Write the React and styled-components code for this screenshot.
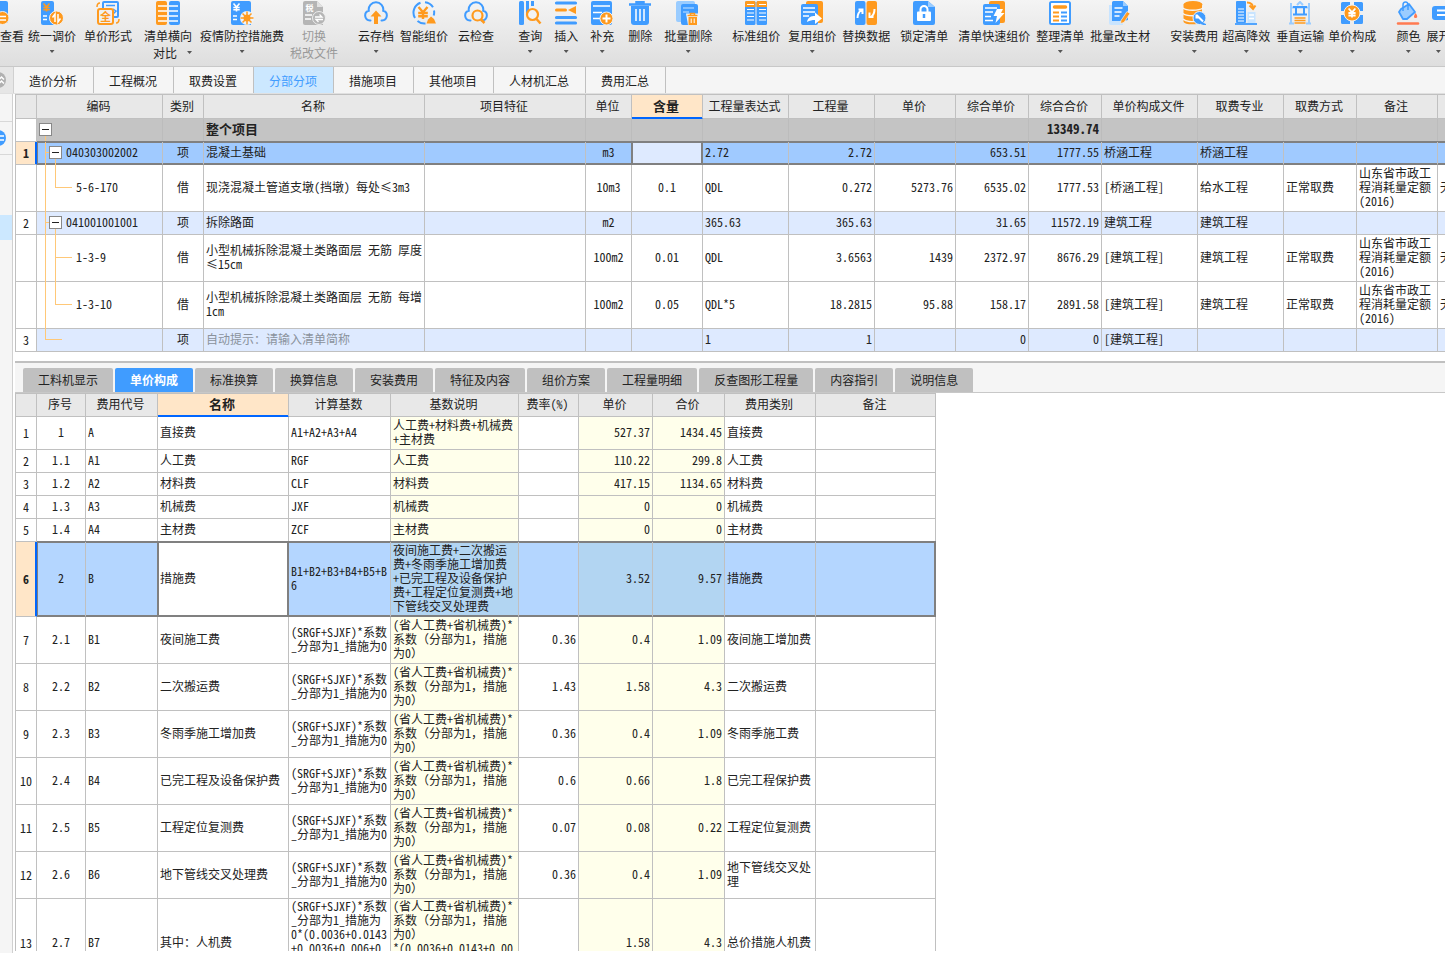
import React from 'react';
import styled, { createGlobalStyle, css } from 'styled-components';

const BLUE = '#409cff';
const ORANGE = '#ff9a1e';
const LINE = '#c0c0c0';
const DARK = '#808080';
const UI_FONT = '"Noto Sans CJK SC", sans-serif';
const GRID_FONT = '"Noto Sans Mono CJK SC", "Noto Sans CJK SC", monospace';

const GlobalStyle = createGlobalStyle`
  * { box-sizing: border-box; }
  body { margin: 0; background: #fff; color: #222; font: 12px/14px ${UI_FONT}; }
  button { font: inherit; color: inherit; border: 0; padding: 0; background: none; cursor: pointer; }
`;

const Page = styled.div`
  display: flex;
  flex-direction: column;
  height: 100vh;
  overflow: hidden;
`;

/* ---------- toolbar ---------- */

const Toolbar = styled.header`
  display: flex;
  align-items: flex-start;
  flex: none;
  height: 67px;
  overflow: hidden;
  background: linear-gradient(#f4f4f4, #dedede);
  border-bottom: 1px solid #c8c8c8;
`;

const Tool = styled.button`
  display: flex;
  flex: none;
  flex-direction: column;
  align-items: center;
  margin-left: ${(p) => p.$gap}px;
  padding-top: 1px;
  line-height: 17px;
  white-space: nowrap;
  color: ${(p) => (p.disabled ? '#999' : '#222')};
`;

const ClippedTool = styled(Tool)`
  width: 22px;
  align-items: flex-start;
`;

const ToolIcon = styled.svg`
  display: block;
  width: 24px;
  height: 24px;
  margin-bottom: 2px;
`;

const SecondLine = styled.span`
  display: flex;
  align-self: ${(p) => (p.$arrow ? 'flex-end' : 'center')};
  align-items: center;
  gap: 10px;
`;

const Arrow = styled.span`
  width: 5px;
  height: 3px;
  margin-top: ${(p) => (p.$below ? 6 : 0)}px;
  background: #555;
  clip-path: polygon(0 0, 100% 0, 50% 100%);
`;

const Coin = ({ x, y, size = 8, color = '#fff', weight = 1.6 }) => (
  <g transform={`translate(${x} ${y}) scale(${size / 8})`}>
    <path d="M-3-4L0-.5 3-4M0-.5V4M-3.200 0h6.400M-3.200 2.200h6.400" fill="none" stroke={color} strokeWidth={weight} />
  </g>
);

const Cloud = () => (
  <path d="M6.500 19.500H6a5 5 0 0 1-1.200-9.800A7.300 7.300 0 1 1 19.200 9.700A5 5 0 0 1 18 19.500h-.5" fill="none" stroke={BLUE} strokeWidth="2" strokeLinecap="round" />
);

const icons = {
  view: (
    <>
      <rect x="-6" y="0" width="14" height="22" rx="2" fill={BLUE} />
      <circle cx="2.500" cy="17" r="6.500" fill={ORANGE} stroke="#f0f0f0" />
      <path d="M-2 15.500h8M-2 19h8" stroke="#fff" strokeWidth="1.500" />
    </>
  ),
  adjust: (
    <>
      <path d="M1 2a2 2 0 0 1 2-2h9a2 2 0 0 1 2 2v22H3a2 2 0 0 1-2-2z" fill={BLUE} />
      <Coin x={6.5} y={6.5} color={ORANGE} />
      <path d="M3 15h4M3 18.500h4" stroke="#fff" strokeWidth="1.500" />
      <circle cx="16.500" cy="17" r="7" fill={ORANGE} stroke="#f0f0f0" />
      <path d="M15 21v-8l-2.500 3.500M18 13v8l2.500-3.500" fill="none" stroke="#fff" strokeWidth="1.500" />
    </>
  ),
  form: (
    <>
      <rect x="7" y="1" width="15" height="15" rx="1" fill="none" stroke={BLUE} strokeWidth="2" />
      <path d="M10 4.500h9M17 8l3 2-3 3" fill="none" stroke={BLUE} strokeWidth="1.500" />
      <path d="M1 6c0-2 1-4 3-4M23 18c0 2-1 4-3 4" fill="none" stroke={ORANGE} strokeWidth="1.500" />
      <rect x="2" y="8" width="15" height="15" rx="2" fill="#f0f0f0" stroke={ORANGE} strokeWidth="2" />
      <text x="9.500" y="19.500" fontSize="11" fontWeight="700" textAnchor="middle" fill={ORANGE} fontFamily="Noto Sans CJK SC">全</text>
    </>
  ),
  compare: (
    <>
      <rect x="0" y="0" width="11" height="24" rx="2" fill={ORANGE} />
      <rect x="13" y="0" width="11" height="24" rx="2" fill={BLUE} />
      <path d="M2 5h9M2 10h9M2 15h9M2 20h9M13 5h9M13 10h9M13 15h9M13 20h9" stroke="#fff" strokeWidth="1.500" />
    </>
  ),
  virus: (
    <>
      <path d="M1 2a2 2 0 0 1 2-2h16a2 2 0 0 1 2 2v22H3a2 2 0 0 1-2-2z" fill={BLUE} />
      <Coin x={6.5} y={6.5} />
      <path d="M3 15h4M3 18.500h4" stroke="#fff" strokeWidth="1.500" />
      <circle cx="17" cy="17" r="7" fill="#eef4fb" />
      <circle cx="17" cy="17" r="3.500" fill={ORANGE} />
      <path d="M17 10.500v13M10.500 17h13M12.500 12.500l9 9M21.500 12.500l-9 9" stroke={ORANGE} strokeWidth="1.500" />
    </>
  ),
  tax: (
    <>
      <path d="M1 2a2 2 0 0 1 2-2h12l6 6v18H3a2 2 0 0 1-2-2z" fill="#b5b5b5" />
      <path d="M15 0l6 6h-6z" fill="#e2e2e2" />
      <text x="7.500" y="10" fontSize="8" fontWeight="700" textAnchor="middle" fill="#fff" fontFamily="Noto Sans CJK SC">税</text>
      <path d="M3 14h7M3 18h6" stroke="#fff" strokeWidth="1.500" />
      <circle cx="17" cy="17" r="6.500" fill="#b5b5b5" stroke="#eee" />
      <path d="M13 16h7l-2.500-2.500M21 18.500h-7l2.500 2.500" fill="none" stroke="#fff" strokeWidth="1.300" />
    </>
  ),
  cloudUp: (
    <>
      <Cloud />
      <path d="M12 9.500l5.500 6H14V23h-4v-7.500H6.500z" fill={ORANGE} />
    </>
  ),
  smart: (
    <>
      <path d="M8.500 1.700A10.500 10.500 0 0 0 3 17M13 1.300a10.500 10.500 0 0 1 8 5M22 9.500a10.500 10.500 0 0 1-.3 5M5.500 20a10.500 10.500 0 0 0 8 2.500" fill="none" stroke={BLUE} strokeWidth="2" />
      <Coin x={11} y={12} size={12} color={ORANGE} />
      <path d="M14.500 22.500l1.500-4 3-3 3 2.500 2 4.500z" fill={ORANGE} />
    </>
  ),
  cloudSearch: (
    <>
      <Cloud />
      <circle cx="13.500" cy="14.500" r="5" fill="#f0f0f0" stroke={ORANGE} strokeWidth="2.200" />
      <path d="M17 18.500l3.500 3.500" stroke={ORANGE} strokeWidth="2.500" />
    </>
  ),
  query: (
    <>
      <rect x="1" y="0" width="5" height="24" rx="1.500" fill={BLUE} />
      <path d="M8 0h3v11l-3 3zM13 0h3v5h-3z" fill={BLUE} />
      <circle cx="14.500" cy="13.500" r="5.500" fill="#f3f3f3" stroke={ORANGE} strokeWidth="2.200" />
      <path d="M18.500 18l4 4.500" stroke={ORANGE} strokeWidth="2.500" />
    </>
  ),
  insert: (
    <>
      <path d="M2.500 2h19M2.500 16.500h19M2.500 22h19" stroke={BLUE} strokeWidth="3.200" strokeLinecap="round" />
      <path d="M2.500 9h9" stroke={ORANGE} strokeWidth="3" strokeLinecap="round" />
      <path d="M14 9l8-4v8z" fill={ORANGE} />
    </>
  ),
  supplement: (
    <>
      <rect x="1" y="0" width="21" height="24" rx="2" fill={BLUE} />
      <path d="M3 5h17M3 11.500h9M3 17.500h7" stroke="#fff" strokeWidth="1.500" />
      <circle cx="16.500" cy="17.500" r="6.500" fill={ORANGE} stroke="#f0f0f0" />
      <path d="M16.500 13.500v8M12.500 17.500h8" stroke="#fff" strokeWidth="2" />
    </>
  ),
  trash: (
    <>
      <path d="M1 3.500h22M8.500 3V1h7v2" fill="none" stroke={BLUE} strokeWidth="2.500" />
      <path d="M3 5h18v16a3 3 0 0 1-3 3H6a3 3 0 0 1-3-3z" fill={BLUE} />
      <path d="M8 8v12M12 8v12M16 8v12" stroke="#fff" strokeWidth="1.500" />
    </>
  ),
  batchTrash: (
    <>
      <rect x="0" y="0" width="19" height="21" rx="2" fill="#9accff" />
      <rect x="5" y="3" width="17" height="21" rx="2" fill={BLUE} />
      <path d="M7 7h11M7 11h6" stroke="#9accff" strokeWidth="1.500" />
      <path d="M10 12.500h14V24H12z" fill="#eef4fb" />
      <path d="M11.500 14.500h10M14.500 14v-1.500h4V14" fill="none" stroke={ORANGE} strokeWidth="1.500" />
      <path d="M12.500 16h8.500v8h-8.500z" fill={ORANGE} />
      <path d="M15.200 17.500v4.500M18.200 17.500v4.500" stroke="#fff" />
    </>
  ),
  standard: (
    <>
      <rect x="1" y="0" width="10.500" height="24" rx="1.500" fill={BLUE} />
      <rect x="12.500" y="0" width="10.500" height="24" rx="1.500" fill={BLUE} />
      <path d="M1 6V1.500A1.500 1.500 0 0 1 2.500 0H10a1.500 1.500 0 0 1 1.500 1.500V6zM12.500 6V1.500A1.500 1.500 0 0 1 14 0h7.500A1.500 1.500 0 0 1 23 1.500V6z" fill={ORANGE} />
      <path d="M3 3.500h7M15 3.500h7M3 8.500h7M15 8.500h7M3 12h7M15 12h7M3 15.500h7M15 15.500h7M3 19h7M15 19h7" stroke="#fff" strokeWidth="1.200" />
    </>
  ),
  reuse: (
    <>
      <rect x="6" y="0" width="17" height="22" rx="2" fill={ORANGE} />
      <rect x="1" y="3" width="17" height="21" rx="2" fill={BLUE} />
      <path d="M3 7h12M3 11h12M3 15h6" stroke="#fff" strokeWidth="1.500" />
      <path d="M7 21c1-5 4-6 8-6v-3.500l7 6-7 5.500v-4c-3 0-5 .5-8 2z" fill="#fff" />
    </>
  ),
  replace: (
    <>
      <rect x="1" y="0" width="10.500" height="24" rx="2" fill={BLUE} />
      <rect x="12.500" y="0" width="10.500" height="24" rx="2" fill={ORANGE} />
      <path d="M3.500 17c0-4 1-6 4-8M4.500 8.500h4V13M20.500 8c0 4-1 6-3 7.500M19.500 16h-4v-4.500" fill="none" stroke="#fff" strokeWidth="2" />
    </>
  ),
  lock: (
    <>
      <path d="M1 2a2 2 0 0 1 2-2h13l7 6v16a2 2 0 0 1-2 2H3a2 2 0 0 1-2-2z" fill={BLUE} />
      <path d="M16 0l7 6h-7z" fill="#9accff" />
      <path d="M8.500 12V8.500a3.500 3.500 0 0 1 7 0V12" fill="none" stroke="#fff" strokeWidth="2" />
      <rect x="5" y="10.500" width="14" height="9.500" rx="1" fill="#fff" />
      <path d="M12 13v4" stroke={BLUE} strokeWidth="2.500" />
    </>
  ),
  quick: (
    <>
      <rect x="7" y="0" width="16" height="22" rx="2" fill={ORANGE} />
      <rect x="1" y="3" width="17" height="21" rx="2" fill={BLUE} />
      <path d="M3 7h12M3 11h8M3 15.500h6M3 19.500h8" stroke="#fff" strokeWidth="1.500" />
      <path d="M15 8h6l-2 4h3.500l-9 10 1.500-7h-3.500z" fill="#fff" />
    </>
  ),
  tidy: (
    <>
      <rect x="2" y="1" width="20" height="22" rx="1.500" fill="#fff" stroke={BLUE} strokeWidth="2" />
      <path d="M6.500 6h11" stroke={ORANGE} strokeWidth="3.500" strokeLinecap="round" />
      <path d="M5 11.500h6M5 15.500h6M5 19.500h6" stroke={ORANGE} strokeWidth="1.800" />
      <path d="M13 11.500h6M13 15.500h6M13 19.500h6" stroke={BLUE} strokeWidth="1.800" />
    </>
  ),
  material: (
    <>
      <path d="M1 4h14v20H3a2 2 0 0 1-2-2z" fill="#c8e4ff" />
      <path d="M4 1.500A1.500 1.500 0 0 1 5.500 0H15l5 5v14l-4 1H4z" fill={BLUE} />
      <path d="M15 0l5 5h-5z" fill="#9accff" />
      <path d="M6.500 7h8M6.500 11h7M6.500 15h5" stroke="#fff" strokeWidth="1.500" />
      <path d="M13 19.500l6-9 3 2-6 9-3.500 1z" fill={ORANGE} stroke="#eef4fb" strokeWidth=".7" />
    </>
  ),
  install: (
    <>
      <path d="M1.500 3.500v17C2 24 14 24 20 22V3.500z" fill={ORANGE} />
      <ellipse cx="11" cy="3.500" rx="9.500" ry="3.500" fill={ORANGE} />
      <path d="M1 7c3 3 16 3 20 0M1 12.500c3 3 16 3 20 0M1 18c3 3 10 3 12 2" fill="none" stroke="#f5f5f5" strokeWidth="1.500" />
      <circle cx="17.500" cy="17" r="6.500" fill={BLUE} stroke="#f0f0f0" />
      <path d="M19 22l5 2" stroke={BLUE} strokeWidth="2" />
      <path d="M14.500 14l3 3 3.500 3.500M14.500 13.500v3h3" fill="none" stroke="#fff" strokeWidth="2" />
    </>
  ),
  high: (
    <>
      <rect x="2" y="0" width="10" height="22" rx="1" fill={BLUE} />
      <path d="M4 8h6M4 11h6M4 14h6M4 17h6M4 20h6" stroke="#fff" strokeWidth="1.200" />
      <rect x="13.500" y="11" width="8" height="11" fill="#c8e4ff" />
      <path d="M15 14h5M15 17.500h5" stroke="#fff" strokeWidth="1.500" />
      <path d="M1 23h22" stroke={BLUE} strokeWidth="1.800" />
      <path d="M13 1.500c4 0 6 1.500 6 5.500M15.500 4.500l3.500 3.500 2.500-3.500" fill="none" stroke={ORANGE} strokeWidth="2" />
    </>
  ),
  vertical: (
    <>
      <path d="M3 2v21M21 2v21M1 22.500h5M18 22.500h5M3 6.500h18M9 4l3-3 3 3" fill="none" stroke="#9accff" strokeWidth="2" />
      <path d="M5 6h14M8 6v7M16 6v7M5 13.500h14" stroke={BLUE} strokeWidth="2" />
      <path d="M6.500 17h11M6.500 19.500h11M6.500 22h11" stroke={ORANGE} strokeWidth="1.300" />
    </>
  ),
  compose: (
    <>
      <path d="M1 2.500A1.500 1.500 0 0 1 2.500 1H10v3L4 10H1zM23 2.500A1.500 1.500 0 0 0 21.500 1H14v3l6 6h3zM1 21.500A1.500 1.500 0 0 0 2.500 23H10v-3l-6-6H1zM23 21.500a1.500 1.500 0 0 1-1.500 1.500H14v-3l6-6h3z" fill={BLUE} />
      <circle cx="12" cy="12" r="8" fill={ORANGE} stroke="#f0f0f0" />
      <Coin x={12} y={12} size={9} />
    </>
  ),
  color: (
    <>
      <path d="M5 8l8-5 6 8-8 7H7l-4-7z" fill="#9accff" stroke={BLUE} strokeWidth="1.800" strokeLinejoin="round" />
      <path d="M7 10V4c0-4 5-4 5 0v5" fill="none" stroke={BLUE} strokeWidth="1.500" />
      <path d="M19.500 12c3 4 1.500 5 0 5s-2.500-1 0-5z" fill="#ff7a50" />
      <path d="M2 22.500h20" stroke="#ff7a50" strokeWidth="2.500" strokeLinecap="round" />
    </>
  ),
  expand: (
    <>
      <rect x="6" y="5" width="16" height="14" rx="3" fill={BLUE} />
      <path d="M11 9.500h8M11 14h8" stroke="#fff" strokeWidth="1.800" />
    </>
  ),
};

const tools = [
  { icon: 'adjust', label: '统一调价', gap: 6, arrow: true },
  { icon: 'form', label: '单价形式', gap: 8 },
  { icon: 'compare', label: '清单横向', second: '对比', gap: 12, arrow: true },
  { icon: 'virus', label: '疫情防控措施费', gap: 8, arrow: true },
  { icon: 'tax', label: '切换', second: '税改文件', gap: 6, disabled: true },
  { icon: 'cloudUp', label: '云存档', gap: 20, arrow: true },
  { icon: 'smart', label: '智能组价', gap: 6 },
  { icon: 'cloudSearch', label: '云检查', gap: 10 },
  { icon: 'query', label: '查询', gap: 24, arrow: true },
  { icon: 'insert', label: '插入', gap: 12, arrow: true },
  { icon: 'supplement', label: '补充', gap: 12, arrow: true },
  { icon: 'trash', label: '删除', gap: 14 },
  { icon: 'batchTrash', label: '批量删除', gap: 12, arrow: true },
  { icon: 'standard', label: '标准组价', gap: 20 },
  { icon: 'reuse', label: '复用组价', gap: 8, arrow: true },
  { icon: 'replace', label: '替换数据', gap: 6 },
  { icon: 'lock', label: '锁定清单', gap: 10 },
  { icon: 'quick', label: '清单快速组价', gap: 10 },
  { icon: 'tidy', label: '整理清单', gap: 6, arrow: true },
  { icon: 'material', label: '批量改主材', gap: 6 },
  { icon: 'install', label: '安装费用', gap: 20, arrow: true },
  { icon: 'high', label: '超高降效', gap: 4, arrow: true },
  { icon: 'vertical', label: '垂直运输', gap: 6, arrow: true },
  { icon: 'compose', label: '单价构成', gap: 4, arrow: true },
  { icon: 'color', label: '颜色', gap: 20, arrow: true },
  { icon: 'expand', label: '展开', gap: 6, arrow: true },
];

function ToolButton({ icon, label, second, gap, arrow, disabled }) {
  return (
    <Tool type="button" $gap={gap} disabled={disabled}>
      <ToolIcon viewBox="0 0 24 24" aria-hidden="true">{icons[icon]}</ToolIcon>
      <span>{label}</span>
      {second && <SecondLine $arrow={arrow}>{second}{arrow && <Arrow />}</SecondLine>}
      {!second && arrow && <Arrow $below />}
    </Tool>
  );
}

/* ---------- page tabs ---------- */

const TabBar = styled.nav`
  display: flex;
  flex: none;
  height: 27px;
  background: #f5f5f5;
  border-bottom: 1px solid #e0e0e0;
`;

const Collapse = styled.button`
  display: flex;
  align-items: center;
  width: 14px;
  overflow: hidden;
  background: #e6e6e6;
  border-right: 1px solid #d0d0d0;
`;

const RoundMark = styled.svg`
  flex: none;
  width: 16px;
  height: 16px;
  margin-left: -10px;
`;

const PageTab = styled.button`
  padding: 2px 16px 0 15px;
  border-right: 1px solid ${LINE};
  white-space: nowrap;
  color: ${(p) => (p.$active ? BLUE : '#222')};
  background: ${(p) => (p.$active ? '#cce8ff' : 'transparent')};
`;

/* ---------- body ---------- */

const Body = styled.div`
  display: flex;
  flex: 1;
  min-height: 0;
`;

const Rail = styled.aside`
  flex: none;
  width: 13px;
  margin-right: 2px;
  background: #f5f5f5;
  border-right: 1px solid #d0d0d0;
`;

const RailCell = styled.div`
  display: flex;
  align-items: center;
  height: ${(p) => p.$height}px;
  overflow: hidden;
  border-bottom: 1px solid #d8d8d8;
`;

const RailSelection = styled.div`
  height: 25px;
  margin-top: 60px;
  background: #cce8ff;
`;

const Main = styled.main`
  display: flex;
  flex: 1;
  flex-direction: column;
  min-width: 0;
`;

const TopPane = styled.section`
  flex: none;
  overflow: hidden;
  padding-bottom: 9px;
  border-bottom: 2px solid ${LINE};
`;

const DetailTabs = styled.nav`
  display: flex;
  flex: none;
  align-items: stretch;
  gap: 2px;
  height: 30px;
  padding: 5px 8px 0;
  background: #f5f5f5;
  border-bottom: 1px solid #c8c8c8;
`;

const DetailTab = styled.button`
  padding: 0 15px;
  border-radius: 2px 2px 0 0;
  white-space: nowrap;
  background: ${(p) => (p.$active ? BLUE : LINE)};
  ${(p) => p.$active && 'color: #fff; font-weight: 700;'}
`;

const BottomPane = styled.section`
  flex: 1;
  min-height: 0;
  margin-bottom: 2px;
  overflow: hidden;
`;

/* ---------- grids ---------- */

const Grid = styled.table`
  width: ${(p) => p.$width};
  min-width: ${(p) => p.$min}px;
  table-layout: fixed;
  border-collapse: separate;
  border-spacing: 0;
  border: solid ${LINE};
  border-width: 1px 0 0 1px;
  font: 12px/14px ${GRID_FONT};
`;

const HeadCell = styled.th`
  height: ${(p) => p.$height}px;
  padding: 0 2px 2px 0;
  font-weight: 400;
  white-space: nowrap;
  background: #e8e8e8;
  border: solid ${LINE};
  border-width: 0 1px 1px 0;
  ${(p) => p.$active && css`
    font-size: 13px;
    font-weight: 700;
    background: #ffe6c8;
    border-bottom-color: #0066ff;
    box-shadow: inset 0 -1px #0066ff;
  `}
`;

const fills = {
  total: '#c4c4c4',
  item: '#deeaff',
  picked: '#a0caff',
  pickedLight: '#b4d6ff',
  pickedYellow: '#b2d5f2',
  yellow: '#ffffeb',
  plain: '#fff',
};

const Cell = styled.td`
  position: relative;
  height: ${(p) => p.$height}px;
  padding: 0 2px 2px;
  text-align: ${(p) => p.$align || 'left'};
  vertical-align: ${(p) => (p.$top ? 'top' : 'middle')};
  white-space: pre;
  background: ${(p) => fills[p.$fill || 'plain']};
  border: solid ${LINE};
  border-width: 0 1px 1px 0;
  ${(p) => p.$muted && 'color: #8a929c;'}
  ${(p) => p.$bold && 'font-size: 13px; font-weight: 700; border-right-color: #bcbcbc;'}
  ${(p) => p.$selected && css`
    border-bottom-color: ${DARK};
    box-shadow: inset 0 1px ${DARK}, inset 0 -1px ${DARK}, 0 -1px ${DARK}${p.$first ? `, inset 1px 0 ${DARK}` : ''}${p.$last ? `, inset -1px 0 ${DARK}` : ''};
    ${p.$last ? `border-right-color: ${DARK};` : ''}
  `}
  ${(p) => p.$focus && css`
    border-right-color: ${DARK};
    border-bottom-color: ${DARK};
    box-shadow: inset 0 0 0 1px ${DARK}, 0 -1px ${DARK}, -1px 0 ${DARK};
  `}
`;

const RowNumber = styled.th`
  padding: 0;
  font-weight: 400;
  background: #fff;
  border: solid ${LINE};
  border-width: 0 1px 1px 0;
  ${(p) => p.$active && css`
    font-weight: 700;
    background: #ffe6c8;
    border-right-color: #0066ff;
    box-shadow: inset -1px 0 #0066ff;
  `}
`;

/* tree guides lie under the code text */
const Guide = styled.span`
  position: absolute;
  background: #ffc878;
`;

const Trunk = styled(Guide)`
  left: ${(p) => p.$x}px;
  top: ${(p) => (p.$from === 'middle' ? '50%' : '0')};
  bottom: ${(p) => (p.$to === 'middle' ? '50%' : '-1px')};
  width: 1px;
`;

const Branch = styled(Guide)`
  left: ${(p) => p.$x}px;
  top: calc(50% - 1px);
  width: 17px;
  height: 1px;
`;

const Node = styled.div`
  position: relative;
  display: flex;
  align-items: center;
  gap: 4px;
  padding-left: ${(p) => p.$indent}px;
`;

const Toggle = styled.button`
  display: grid;
  place-items: center;
  width: 13px;
  height: 13px;
  background: #fff;
  border: 1px solid #888;

  &::before {
    content: '';
    width: 7px;
    height: 1px;
    background: #222;
  }
`;

function TreeCell({ level, code, last }) {
  return (
    <>
      {level === 0 && <Trunk $x={8} $from="middle" />}
      {level > 0 && <Trunk $x={8} $to={level === 1 && last ? 'middle' : 'end'} />}
      {level === 1 && <Branch $x={8} />}
      {level === 1 && !last && <Trunk $x={18} $from="middle" />}
      {level === 2 && <Trunk $x={18} $to={last ? 'middle' : 'end'} />}
      {level === 2 && <Branch $x={18} />}
      <Node $indent={[0, 10, 37][level]}>
        {level < 2 && !(level === 1 && last) && <Toggle type="button" aria-label="折叠" />}
        {code}
      </Node>
    </>
  );
}

const mainColumns = [
  ['', 21], ['编码', 126], ['类别', 41], ['名称', 0], ['项目特征', 161], ['单位', 46], ['含量', 71],
  ['工程量表达式', 86], ['工程量', 86], ['单价', 81], ['综合单价', 73], ['综合合价', 73],
  ['单价构成文件', 96], ['取费专业', 86], ['取费方式', 73], ['备注', 81], ['', 80],
];
const mainAlign = ['left', 'center', 'left', 'left', 'center', 'center', 'left', 'right', 'right', 'right', 'right', 'left', 'left', 'left', 'left', 'left'];
const NOTE = '山东省市政工\n程消耗量定额\n(2016)';

const mainRows = [
  { no: '', kind: 'total', level: 0, cells: ['', '', '整个项目', '', '', '', '', '', '', '', '13349.74', '', '', '', '', ''] },
  { no: '1', kind: 'picked', level: 1, cells: ['040303002002', '项', '混凝土基础', '', 'm3', '', '2.72', '2.72', '', '653.51', '1777.55', '桥涵工程', '桥涵工程', '', '', ''] },
  { no: '', kind: 'plain', level: 2, last: true, cells: ['5-6-170', '借', '现浇混凝土管道支墩(挡墩) 每处≤3m3', '', '10m3', '0.1', 'QDL', '0.272', '5273.76', '6535.02', '1777.53', '[桥涵工程]', '给水工程', '正常取费', NOTE, '无'] },
  { no: '2', kind: 'item', level: 1, cells: ['041001001001', '项', '拆除路面', '', 'm2', '', '365.63', '365.63', '', '31.65', '11572.19', '建筑工程', '建筑工程', '', '', ''] },
  { no: '', kind: 'plain', level: 2, cells: ['1-3-9', '借', '小型机械拆除混凝土类路面层 无筋 厚度\n≤15cm', '', '100m2', '0.01', 'QDL', '3.6563', '1439', '2372.97', '8676.29', '[建筑工程]', '建筑工程', '正常取费', NOTE, '无'] },
  { no: '', kind: 'plain', level: 2, last: true, cells: ['1-3-10', '借', '小型机械拆除混凝土类路面层 无筋 每增\n1cm', '', '100m2', '0.05', 'QDL*5', '18.2815', '95.88', '158.17', '2891.58', '[建筑工程]', '建筑工程', '正常取费', NOTE, '无'] },
  { no: '3', kind: 'item', level: 1, last: true, hint: true, cells: ['', '项', '自动提示：请输入清单简称', '', '', '', '1', '1', '', '0', '0', '[建筑工程]', '', '', '', ''] },
];

function MainGrid() {
  return (
    <Grid $width="100%" $min={1503}>
      <colgroup>
        {mainColumns.map(([, w], i) => <col key={i} width={w || undefined} />)}
      </colgroup>
      <thead>
        <tr>
          {mainColumns.map(([name], i) => <HeadCell key={i} scope="col" $height={24} $active={name === '含量'}>{name}</HeadCell>)}
        </tr>
      </thead>
      <tbody>
        {mainRows.map((row, r) => {
          const selected = row.kind === 'picked';
          return (
            <tr key={r}>
              <RowNumber scope="row" $active={selected}>{row.no}</RowNumber>
              {row.cells.map((text, i) => {
                const focus = selected && i === 5;
                return (
                  <Cell
                    key={i}
                    $height={row.level === 2 ? 47 : 23}
                    $align={mainAlign[i]}
                    $fill={focus ? 'item' : row.kind}
                    $bold={row.kind === 'total'}
                    $muted={row.hint && i === 2}
                    $selected={selected}
                    $first={i === 0}
                    $focus={focus}
                  >
                    {i === 0 ? <TreeCell level={row.level} code={text} last={row.last} /> : text}
                  </Cell>
                );
              })}
            </tr>
          );
        })}
      </tbody>
    </Grid>
  );
}

const feeColumns = [
  ['', 21], ['序号', 49], ['费用代号', 72], ['名称', 131], ['计算基数', 102], ['基数说明', 128],
  ['费率(%)', 60], ['单价', 74], ['合价', 72], ['费用类别', 91], ['备注', 120],
];
const feeAlign = ['center', 'left', 'left', 'left', 'left', 'right', 'right', 'right', 'left', 'left'];
const BASE = '(SRGF+SJXF)*系数\n_分部为1_措施为0';
const EXPLAIN = '(省人工费+省机械费)*\n系数（分部为1，措施\n为0）';

const feeRows = [
  [33, '1', 'A', '直接费', 'A1+A2+A3+A4', '人工费+材料费+机械费\n+主材费', '', '527.37', '1434.45', '直接费', ''],
  [23, '1.1', 'A1', '人工费', 'RGF', '人工费', '', '110.22', '299.8', '人工费', ''],
  [23, '1.2', 'A2', '材料费', 'CLF', '材料费', '', '417.15', '1134.65', '材料费', ''],
  [23, '1.3', 'A3', '机械费', 'JXF', '机械费', '', '0', '0', '机械费', ''],
  [23, '1.4', 'A4', '主材费', 'ZCF', '主材费', '', '0', '0', '主材费', ''],
  [75, '2', 'B', '措施费', 'B1+B2+B3+B4+B5+B\n6', '夜间施工费+二次搬运\n费+冬雨季施工增加费\n+已完工程及设备保护\n费+工程定位复测费+地\n下管线交叉处理费', '', '3.52', '9.57', '措施费', ''],
  [47, '2.1', 'B1', '夜间施工费', BASE, EXPLAIN, '0.36', '0.4', '1.09', '夜间施工增加费', ''],
  [47, '2.2', 'B2', '二次搬运费', BASE, EXPLAIN, '1.43', '1.58', '4.3', '二次搬运费', ''],
  [47, '2.3', 'B3', '冬雨季施工增加费', BASE, EXPLAIN, '0.36', '0.4', '1.09', '冬雨季施工费', ''],
  [47, '2.4', 'B4', '已完工程及设备保护费', BASE, EXPLAIN, '0.6', '0.66', '1.8', '已完工程保护费', ''],
  [47, '2.5', 'B5', '工程定位复测费', BASE, EXPLAIN, '0.07', '0.08', '0.22', '工程定位复测费', ''],
  [47, '2.6', 'B6', '地下管线交叉处理费', BASE, EXPLAIN, '0.36', '0.4', '1.09', '地下管线交叉处\n理', ''],
  [89, '2.7', 'B7', '其中：人机费', '(SRGF+SJXF)*系数\n_分部为1_措施为\n0*(0.0036+0.0143\n+0.0036+0.006+0', `${EXPLAIN}\n*(0.0036+0.0143+0.00`, '', '1.58', '4.3', '总价措施人机费', ''],
];

function FeeGrid() {
  return (
    <Grid $width="921px" $min={921}>
      <colgroup>
        {feeColumns.map(([, w], i) => <col key={i} width={w} />)}
      </colgroup>
      <thead>
        <tr>
          {feeColumns.map(([name], i) => <HeadCell key={i} scope="col" $height={23} $active={name === '名称'}>{name}</HeadCell>)}
        </tr>
      </thead>
      <tbody>
        {feeRows.map(([height, ...cells], r) => {
          const selected = r === 5;
          return (
            <tr key={r}>
              <RowNumber scope="row" $active={selected}>{r + 1}</RowNumber>
              {cells.map((text, i) => {
                const yellow = i === 4 || i === 6 || i === 7;
                const focus = selected && i === 2;
                let fill = yellow ? 'yellow' : 'plain';
                if (selected && !focus) fill = yellow ? 'pickedYellow' : 'pickedLight';
                return (
                  <Cell
                    key={i}
                    $height={height}
                    $align={feeAlign[i]}
                    $fill={fill}
                    $top={height === 89 && (i === 3 || i === 4)}
                    $selected={selected}
                    $first={i === 0}
                    $last={i === 9}
                    $focus={focus}
                  >
                    {text}
                  </Cell>
                );
              })}
            </tr>
          );
        })}
      </tbody>
    </Grid>
  );
}

const pageTabs = ['造价分析', '工程概况', '取费设置', '分部分项', '措施项目', '其他项目', '人材机汇总', '费用汇总'];
const detailTabs = ['工料机显示', '单价构成', '标准换算', '换算信息', '安装费用', '特征及内容', '组价方案', '工程量明细', '反查图形工程量', '内容指引', '说明信息'];

export default function App() {
  return (
    <Page>
      <GlobalStyle />
      <Toolbar>
        <ClippedTool type="button" $gap={0}>
          <ToolIcon viewBox="0 0 24 24" aria-hidden="true">{icons.view}</ToolIcon>
          <span>查看</span>
        </ClippedTool>
        {tools.map((tool) => <ToolButton key={tool.label} {...tool} />)}
      </Toolbar>
      <TabBar>
        <Collapse type="button" aria-label="收起">
          <RoundMark viewBox="0 0 16 16">
            <circle cx="8" cy="8" r="8" fill="#b0b0b0" />
            <path d="M9 7.500l2.500-2.500L14 7.500M9 11.500L11.500 9l2.500 2.500" fill="none" stroke="#fff" strokeWidth="1.500" />
          </RoundMark>
        </Collapse>
        {pageTabs.map((name) => <PageTab key={name} type="button" $active={name === '分部分项'}>{name}</PageTab>)}
      </TabBar>
      <Body>
        <Rail>
          <RailCell $height={28} />
          <RailCell $height={33}>
            <RoundMark viewBox="0 0 16 16">
              <circle cx="8" cy="8" r="8" fill={BLUE} />
              <path d="M10 6h4M10 10h4" stroke="#fff" strokeWidth="1.500" />
            </RoundMark>
          </RailCell>
          <RailSelection />
        </Rail>
        <Main>
          <TopPane><MainGrid /></TopPane>
          <DetailTabs>
            {detailTabs.map((name) => <DetailTab key={name} type="button" $active={name === '单价构成'}>{name}</DetailTab>)}
          </DetailTabs>
          <BottomPane><FeeGrid /></BottomPane>
        </Main>
      </Body>
    </Page>
  );
}
